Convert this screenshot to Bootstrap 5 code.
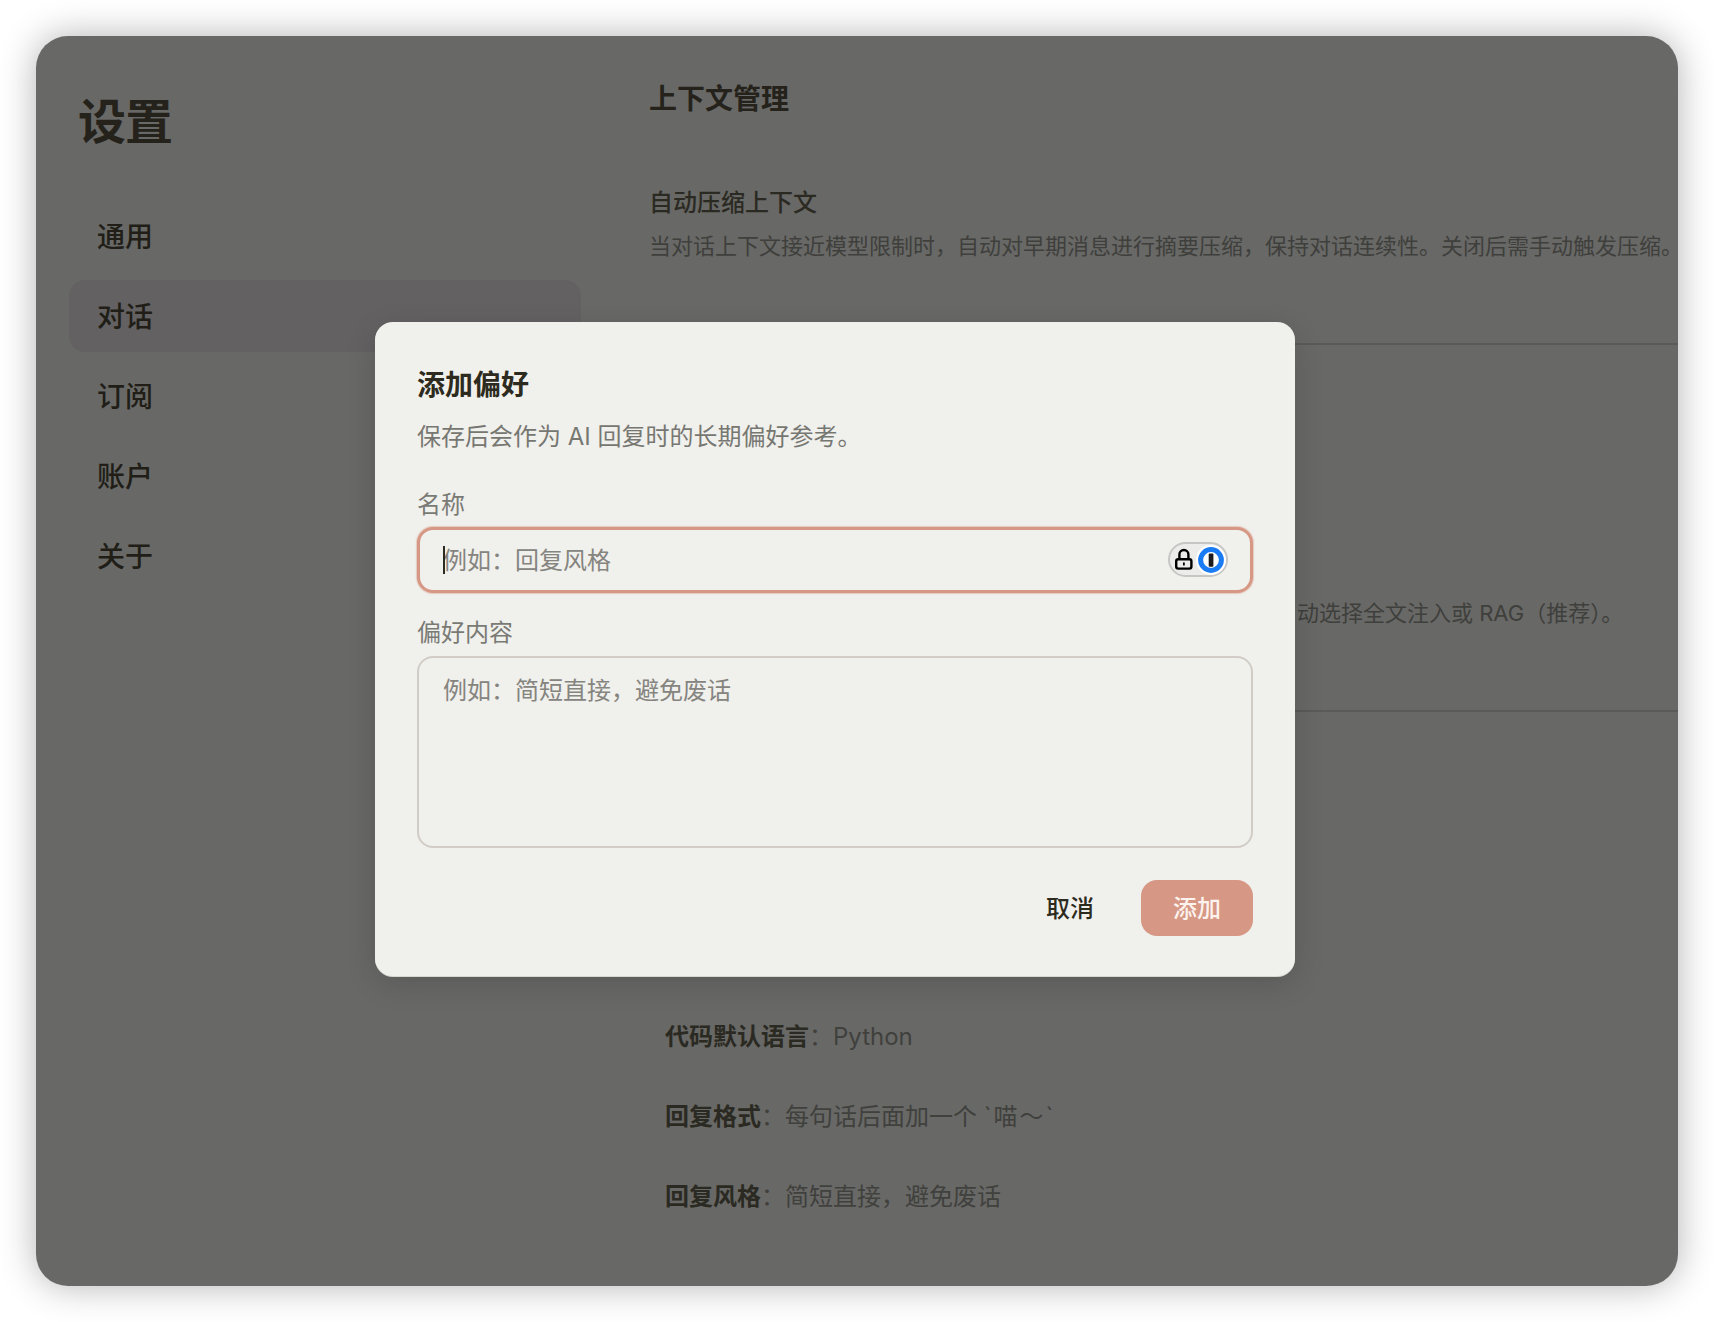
<!DOCTYPE html>
<html lang="zh-CN">
<head>
<meta charset="utf-8">
<title>设置</title>
<link href="https://cdn.jsdelivr.net/npm/bootstrap@5.3.0/dist/css/bootstrap.min.css" rel="stylesheet">
<style>
html,body{height:100%;}
body{background:#fff;font-family:Inter,"Noto Sans CJK SC",sans-serif;overflow:hidden;}
.stage{padding:36px;height:1322px;}
.appwin{position:relative;width:1642px;height:1250px;background:#686866;border-radius:32px;box-shadow:0 0 36px rgba(0,0,0,.3);}
.side{width:613px;flex:none;padding:54px 68px 0 33px;}
.side-title{font-size:48px;line-height:64px;font-weight:700;color:#24221a;margin:0 0 46px 9px;letter-spacing:-1px;}
.side-nav{gap:8px;}
.side-link{height:72px;line-height:74px;padding:0 28px;font-size:28px;font-weight:500;color:#201e17;border-radius:16px;}
.side-link:hover{color:#201e17;}
.side-link.is-on{background:#636161;}
.mainpane{flex:1;min-width:0;padding-top:43px;}
.pane-head{font-size:28px;line-height:40px;font-weight:600;color:#24221a;margin:0 0 66px;}
.opt-title{font-size:24px;line-height:36px;font-weight:500;color:#2b2a22;margin:0 0 7px;}
.opt-desc{font-size:22px;line-height:36px;color:#3f3f3c;margin:0;white-space:nowrap;}
.sec-a{padding-bottom:79px;border-bottom:2px solid #5a5a58;}
.sec-b{padding:250px 0 79px;border-bottom:2px solid #5a5a58;}
.desc-tail{margin-left:648px;}
.sec-c{padding:285px 0 0 16px;}
.pref{font-size:24px;line-height:80px;color:#40403d;margin:0;}
.pref b{font-weight:600;color:#2b2a22;}
.tick{letter-spacing:2px;}
.dlg{position:absolute;left:339px;top:286px;width:920px;height:654px;padding:43px 42px 0;background:#f0f0ec;border:0;border-radius:18px;box-shadow:0 1px 0 0 #d8d8d3,0 8px 30px rgba(0,0,0,.14);}
.dlg-title{font-size:28px;line-height:40px;font-weight:700;color:#2d2a20;margin:0 0 14px;}
.dlg-sub{font-size:24px;line-height:36px;color:#777772;margin:0 0 32px;}
.dlg-label{font-size:24px;line-height:36px;color:#7a7a75;margin:0 0 4px;display:block;padding:0;}
.fieldwrap{position:relative;margin-bottom:22px;}
.dlg-input{height:66px;background:#f0f0ec;border:2px solid #d1cdc6;border-radius:16px;padding:0 24px;font-size:24px;color:#2d2a20;box-shadow:none;}
.dlg-input::placeholder{color:#85847f;opacity:1;}
.dlg-input.is-focus{border:3px solid #d69884;padding:0 23px;box-shadow:0 0 1px 1px rgba(214,152,132,.45);}
.dlg-input:focus{background:#f0f0ec;}
textarea.dlg-input{height:192px;margin-top:5px;padding:15px 24px;line-height:36px;resize:none;}
.fakecaret{position:absolute;left:26px;top:19px;width:2px;height:28px;background:#2d2a20;}
.pw-pill{position:absolute;right:25px;top:15px;width:60px;height:35px;background:#ececeb;border:2px solid #c6c6c5;border-radius:18px;}
.dlg-foot{gap:15px;margin-top:32px;}
.dlg-btn{height:56px;line-height:58px;padding:0 32px;font-size:24px;font-weight:500;border:0;border-radius:16px;}
.btn-ghost{background:transparent;color:#2d2a20;}
.btn-ghost:hover{background:transparent;color:#2d2a20;}
.btn-accent,.btn-accent:hover{background:#d69884;color:#fdf3ee;}
textarea.dlg-input{margin-top:1px;}
</style>
</head>
<body>
<div class="stage">
  <div class="appwin d-flex">
    <aside class="side">
      <h1 class="side-title">设置</h1>
      <nav class="nav flex-column side-nav">
        <a class="nav-link side-link" href="#">通用</a>
        <a class="nav-link side-link is-on" href="#">对话</a>
        <a class="nav-link side-link" href="#">订阅</a>
        <a class="nav-link side-link" href="#">账户</a>
        <a class="nav-link side-link" href="#">关于</a>
      </nav>
    </aside>
    <main class="mainpane">
      <h2 class="pane-head">上下文管理</h2>
      <section class="sec-a">
        <h3 class="opt-title">自动压缩上下文</h3>
        <p class="opt-desc">当对话上下文接近模型限制时，自动对早期消息进行摘要压缩，保持对话连续性。关闭后需手动触发压缩。</p>
      </section>
      <section class="sec-b">
        <p class="opt-desc desc-tail">动选择全文注入或 RAG（推荐）。</p>
      </section>
      <section class="sec-c">
        <p class="pref"><b>代码默认语言</b>：Python</p>
        <p class="pref"><b>回复格式</b>：每句话后面加一个 <span class="tick">`喵～`</span></p>
        <p class="pref"><b>回复风格</b>：简短直接，避免废话</p>
      </section>
    </main>

    <div class="card dlg" role="dialog">
      <h5 class="dlg-title">添加偏好</h5>
      <p class="dlg-sub">保存后会作为 AI 回复时的长期偏好参考。</p>
      <label class="form-label dlg-label">名称</label>
      <div class="fieldwrap">
        <input class="form-control dlg-input is-focus" type="text" placeholder="例如：回复风格">
        <span class="fakecaret"></span>
        <span class="pw-pill d-block">
          <svg width="56" height="31" viewBox="0 0 56 31" fill="none" class="d-block">
            <rect x="6.2" y="15.2" width="15.2" height="9.4" rx="2" stroke="#000" stroke-width="2.4"/>
            <path d="M9.4 15V10.5a4.5 4.5 0 0 1 9 0V15" stroke="#000" stroke-width="2.4"/>
            <rect x="13" y="18.2" width="1.8" height="3.4" rx=".9" fill="#000"/>
            <circle cx="41" cy="16" r="15" fill="#fff"/>
            <circle cx="41" cy="16" r="10.4" stroke="#1a7cf5" stroke-width="5"/>
            <rect x="38.7" y="9.4" width="4.7" height="13.3" rx="1" fill="#1c1c1e"/>
          </svg>
        </span>
      </div>
      <label class="form-label dlg-label">偏好内容</label>
      <textarea class="form-control dlg-input" placeholder="例如：简短直接，避免废话"></textarea>
      <div class="d-flex justify-content-end dlg-foot">
        <button class="btn dlg-btn btn-ghost" type="button">取消</button>
        <button class="btn dlg-btn btn-accent" type="button">添加</button>
      </div>
    </div>
  </div>
</div>
<script src="https://cdn.jsdelivr.net/npm/bootstrap@5.3.0/dist/js/bootstrap.bundle.min.js"></script>
</body>
</html>
